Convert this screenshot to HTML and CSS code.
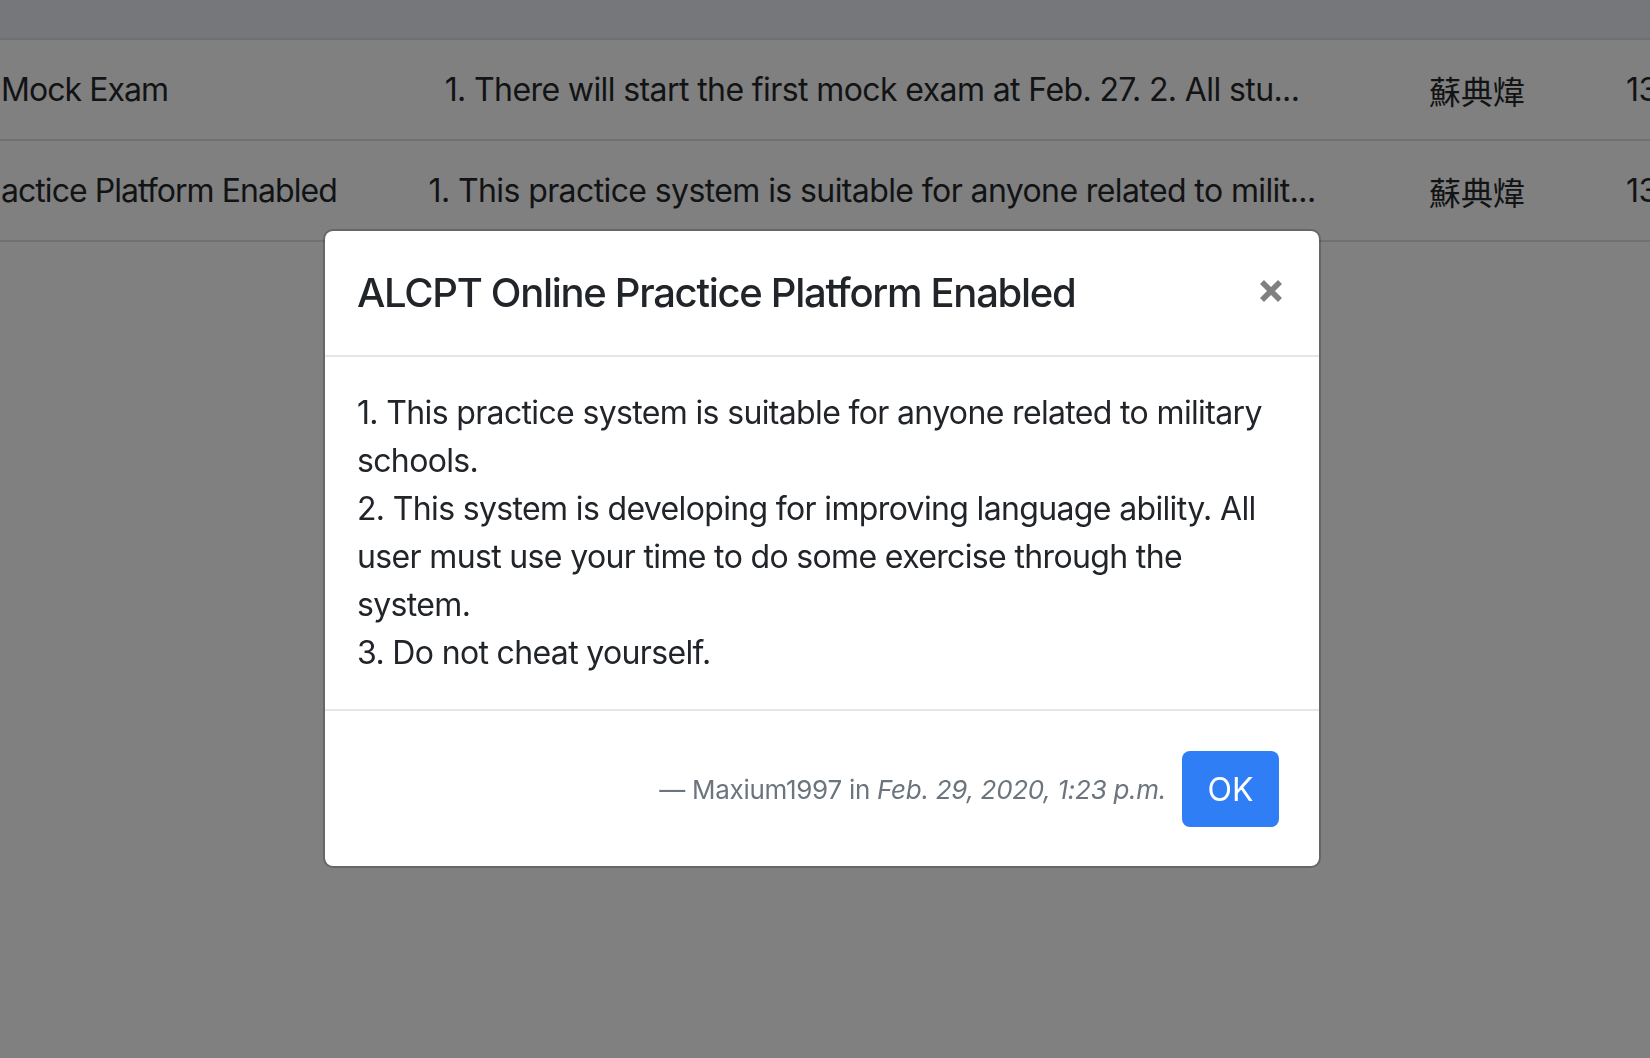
FILE: index.html
```html
<!DOCTYPE html>
<html lang="en">
<head>
<meta charset="utf-8">
<title>ALCPT Announcements</title>
<link rel="stylesheet" href="styles.css">
</head>
<body>
<div class="page">
  <div class="topband"></div>
  <div class="table">
    <div class="row">
      <div class="cell c1">Mock Exam</div>
      <div class="cell c2">1. There will start the first mock exam at Feb. 27. 2. All stu...</div>
      <div class="cell c3">蘇典煒</div>
      <div class="cell c4">13</div>
    </div>
    <div class="row">
      <div class="cell c1">actice Platform Enabled</div>
      <div class="cell c2">1. This practice system is suitable for anyone related to milit...</div>
      <div class="cell c3">蘇典煒</div>
      <div class="cell c4">13</div>
    </div>
  </div>
</div>
<div class="overlay">
  <div class="modal">
    <div class="modal-header">
      <h5 class="modal-title">ALCPT Online Practice Platform Enabled</h5>
      <button class="close" aria-label="Close">
        <svg width="24" height="24" viewBox="0 0 24 24"><path d="M3 3 L21 21 M21 3 L3 21" stroke="#808080" stroke-width="5.6" fill="none"/></svg>
      </button>
    </div>
    <div class="modal-body">
      1. This practice system is suitable for anyone related to military schools.<br>
      2. This system is developing for improving language ability. All user must use your time to do some exercise through the system.<br>
      3. Do not cheat yourself.
    </div>
    <div class="modal-footer">
      <span class="meta">— Maxium1997 in <em>Feb. 29, 2020, 1:23 p.m.</em></span>
      <button class="btn">OK</button>
    </div>
  </div>
</div>
</body>
</html>
```
FILE: styles.css
```css
html, body {
  margin: 0;
  padding: 0;
  width: 1650px;
  height: 1058px;
  overflow: hidden;
  background: #808080;
  font-family: Inter, Roboto, "Noto Sans CJK TC", sans-serif;
}
.page {
  width: 1650px;
  overflow: hidden;
}
.topband {
  height: 38px;
  background: #76777a;
  border-bottom: 2px solid #6f7073;
}
.row {
  display: flex;
  height: 99px;
  align-items: center;
  border-bottom: 2px solid #717173;
  white-space: nowrap;
  font-size: 32px;
  letter-spacing: -0.6px;
  color: #121315;
}
.cell { flex: none; overflow: hidden; }
.c1 { width: 400px; text-align: left; padding-left: 1px; box-sizing: border-box; letter-spacing: -0.95px; }
.c2 { width: 944px; text-align: center; overflow: visible; }
.c3 { width: 266px; text-align: center; font-family: "Noto Sans CJK TC", sans-serif; letter-spacing: 0; }
.c4 { width: 100px; padding-left: 16px; }

.overlay {
  position: fixed;
  inset: 0;
  padding: 229px 0 0 323px;
}
.modal {
  width: 998px;
  box-sizing: border-box;
  background: #fff;
  background-clip: padding-box;
  border: 2px solid rgba(0,0,0,.2);
  border-radius: 10px;
  color: #212529;
}
.modal-header {
  display: flex;
  align-items: center;
  justify-content: space-between;
  padding: 32px 36px 32px 32px;
  border-bottom: 2px solid #e4e6ea;
}
.modal-title {
  margin: 0;
  font-size: 40px;
  line-height: 60px;
  font-weight: 500;
  letter-spacing: -1.3px;
}
.close {
  background: none;
  border: 0;
  padding: 0;
  margin-top: -4px;
  display: flex;
}
.modal-body {
  padding: 32px;
  font-size: 32px;
  line-height: 48px;
  letter-spacing: -0.65px;
}
.modal-footer {
  display: flex;
  justify-content: flex-end;
  align-items: center;
  gap: 16px;
  padding: 40px 40px 39px 32px;
  border-top: 2px solid #e4e6ea;
}
.meta {
  font-size: 26px;
  color: #6c757d;
  letter-spacing: -0.28px;
}
.btn {
  height: 76px;
  width: 97px;
  border: 0;
  border-radius: 8px;
  background: #2f7ef6;
  color: #fff;
  font-family: Inter, Roboto, sans-serif;
  font-size: 32px;
  padding: 0;
}
```
